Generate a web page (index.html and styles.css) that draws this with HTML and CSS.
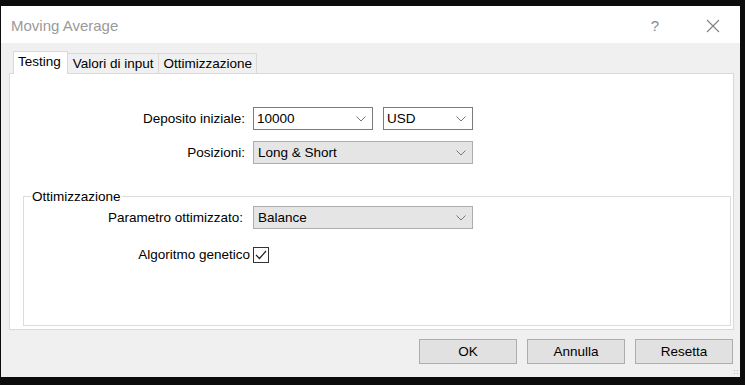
FILE: index.html
```html
<!DOCTYPE html>
<html lang="it">
<head>
    <meta charset="UTF-8">
    <title>Moving Average</title>
    <link rel="stylesheet" href="styles.css">
</head>
<body>
    <div class="dialog">
        <div class="titlebar">
            <span class="title">Moving Average</span>
            <span class="help">?</span>
            <svg class="close" width="14" height="14" viewBox="0 0 14 14">
                <path d="M1 1 L13 13 M13 1 L1 13" stroke="#808080" stroke-width="1.1" fill="none"/>
            </svg>
        </div>

        <div class="body">
            <div class="tabs">
                <div class="tab active">Testing</div>
                <div class="tab">Valori di input</div>
                <div class="tab">Ottimizzazione</div>
            </div>

            <div class="panel">
                <div class="row first">
                    <label class="row-label">Deposito iniziale:</label>
                    <div class="select edit small">10000
                        <svg class="arrow" width="10" height="6" viewBox="0 0 10 6"><polyline points="0.5,0.5 5,5 9.5,0.5" fill="none" stroke="#777" stroke-width="1"/></svg>
                    </div>
                    <div class="select edit currency">USD
                        <svg class="arrow" width="10" height="6" viewBox="0 0 10 6"><polyline points="0.5,0.5 5,5 9.5,0.5" fill="none" stroke="#777" stroke-width="1"/></svg>
                    </div>
                </div>
                <div class="row">
                    <label class="row-label">Posizioni:</label>
                    <div class="select wide">Long &amp; Short
                        <svg class="arrow" width="10" height="6" viewBox="0 0 10 6"><polyline points="0.5,0.5 5,5 9.5,0.5" fill="none" stroke="#777" stroke-width="1"/></svg>
                    </div>
                </div>

                <fieldset class="group">
                    <legend>Ottimizzazione</legend>
                    <div class="row">
                        <label class="row-label">Parametro ottimizzato:</label>
                        <div class="select wide">Balance
                            <svg class="arrow" width="10" height="6" viewBox="0 0 10 6"><polyline points="0.5,0.5 5,5 9.5,0.5" fill="none" stroke="#777" stroke-width="1"/></svg>
                        </div>
                    </div>
                    <div class="row check-row">
                        <label class="row-label">Algoritmo genetico</label>
                        <span class="checkbox">
                            <svg width="14" height="14" viewBox="0 0 14 14"><polyline points="2,7 5.5,10.5 12,3" fill="none" stroke="#222" stroke-width="1.2"/></svg>
                        </span>
                    </div>
                </fieldset>
            </div>

            <div class="buttons">
                <button>OK</button>
                <button>Annulla</button>
                <button>Resetta</button>
            </div>
            <div class="grip"></div>
        </div>
    </div>
</body>
</html>
```

FILE: styles.css
```css
body {
    margin: 0;
    padding: 6px 0 0 1px;
    background-color: #0c0c0c;
    font-family: "Liberation Sans", Arial, sans-serif;
    font-size: 13.5px;
    color: #000;
    height: 385px;
    box-sizing: border-box;
    overflow: hidden;
}
.dialog {
    width: 739px;
    height: 371px;
    background-color: #f0f0f0;
    display: flex;
    flex-direction: column;
}
.titlebar {
    height: 37px;
    background-color: #fff;
    display: flex;
    align-items: center;
    padding-left: 10px;
    padding-top: 2px;
    box-sizing: border-box;
}
.title {
    color: #9a9a9a;
    font-size: 15px;
}
.help {
    margin-left: auto;
    color: #8a8a8a;
    font-size: 15px;
    margin-right: 47px;
}
.close {
    margin-right: 20px;
}
.body {
    flex: 1;
    position: relative;
    padding: 8px 0 0 8px;
}
.tabs {
    display: flex;
    padding-left: 4px;
    height: 22px;
    align-items: flex-end;
}
.tab {
    height: 19px;
    line-height: 19px;
    padding: 0 4px 0 5px;
    border: 1px solid #d9d9d9;
    border-bottom: none;
    margin-left: -1px;
    background-color: #f0f0f0;
}
.tab.active {
    height: 22px;
    line-height: 20px;
    background-color: #fff;
    margin-left: 0;
    padding: 0 6px 0 4px;
    position: relative;
    z-index: 1;
    margin-bottom: -1px;
}
.panel {
    width: 723px;
    height: 255px;
    background-color: #fff;
    border: 1px solid #d9d9d9;
}
.row {
    display: flex;
    align-items: center;
    height: 23px;
    margin-top: 11px;
}
.row.first {
    margin-top: 33px;
}
.row-label {
    width: 235px;
    text-align: right;
    margin-right: 8px;
}
.select {
    height: 21px;
    box-sizing: content-box;
    border: 1px solid #adadad;
    background-color: #e5e5e5;
    display: flex;
    align-items: center;
    padding-left: 4px;
    position: relative;
}
.select.edit {
    border-color: #7a7a7a;
    background-color: #fff;
    padding-left: 3px;
}
.select.small {
    width: 115px;
}
.select.currency {
    width: 85px;
    margin-left: 10px;
}
.select.wide {
    width: 214px;
}
.arrow {
    position: absolute;
    right: 6px;
    top: 8px;
}
.group {
    margin: 25px 2px 0 13px;
    padding: 0;
    height: 135px;
    border: 1px solid #dcdcdc;
}
.group legend {
    padding: 0 1px;
    margin-left: 7px;
}
.group .row {
    margin-top: 2px;
}
.group .row-label {
    width: 219px;
    margin-right: 10px;
}
.group .check-row {
    margin-top: 14px;
}
.check-row .row-label {
    width: 226px;
    margin-right: 3px;
}
.checkbox {
    width: 14px;
    height: 14px;
    border: 1px solid #333;
    background-color: #fff;
    display: flex;
}
.buttons {
    display: flex;
    justify-content: flex-end;
    gap: 10px;
    margin-top: 9px;
    padding-right: 7px;
}
button {
    width: 98px;
    height: 25px;
    background-color: #e1e1e1;
    border: 1px solid #adadad;
    font-family: "Liberation Sans", Arial, sans-serif;
    font-size: 13.5px;
    color: #000;
    padding: 0;
}
.grip {
    position: absolute;
    right: 1px;
    bottom: 2px;
    width: 6px;
    height: 6px;
    background-image: radial-gradient(#bcbcbc 0.9px, transparent 1px);
    background-size: 3px 3px;
}
```
